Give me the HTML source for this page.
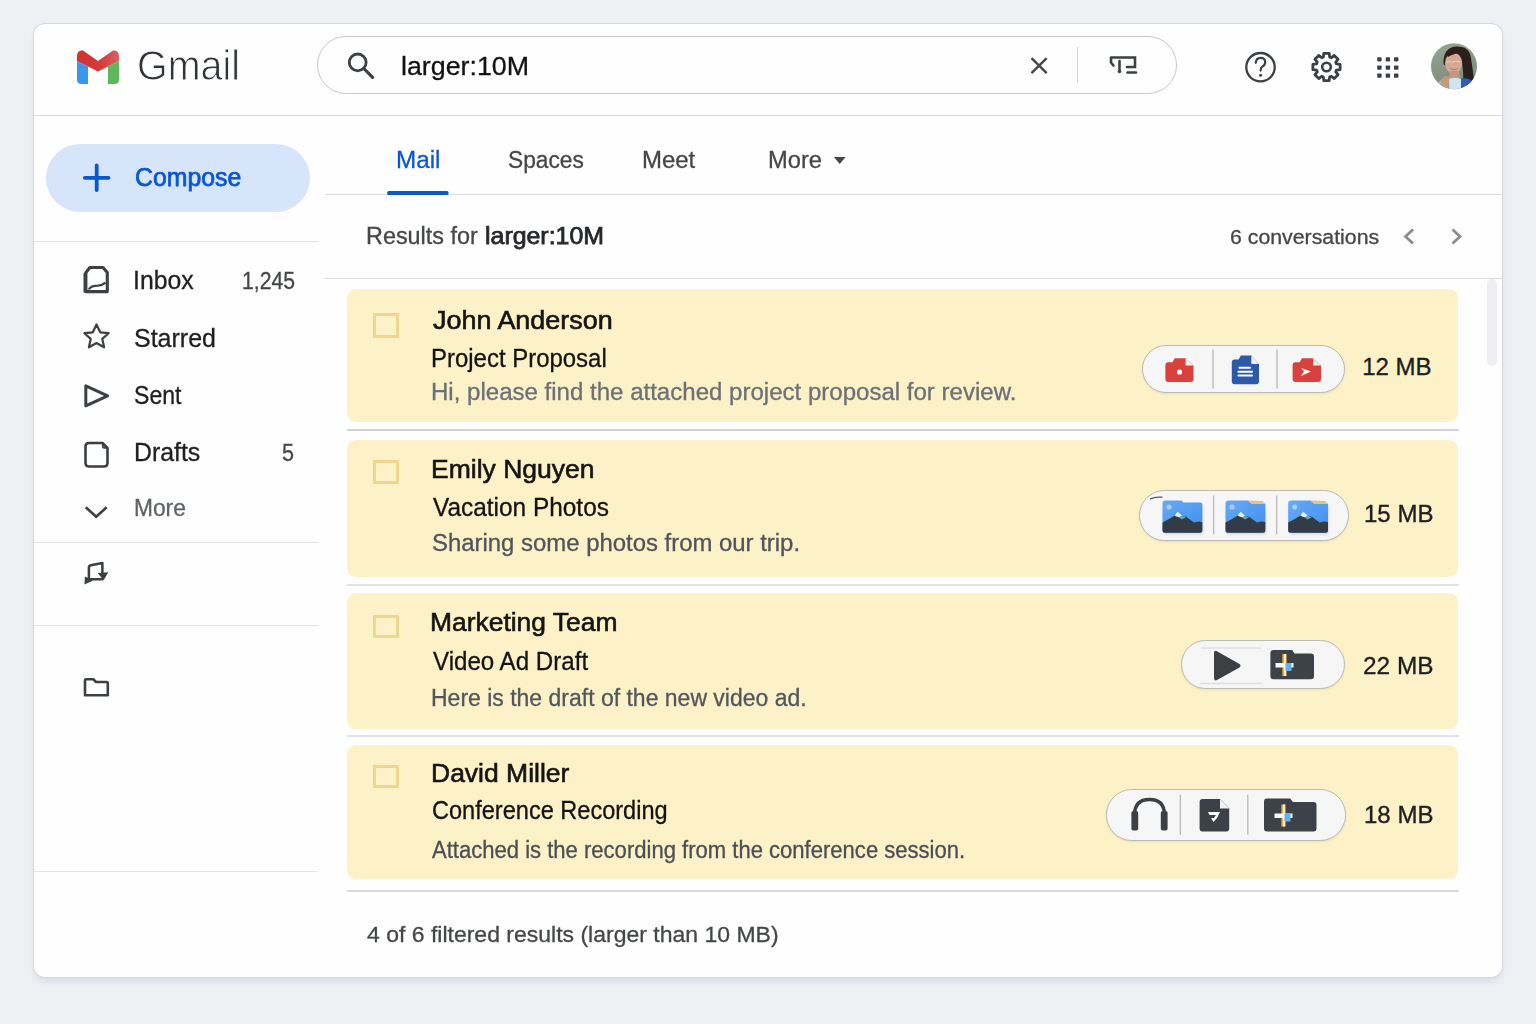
<!DOCTYPE html>
<html><head><meta charset="utf-8">
<style>
html,body{margin:0;padding:0;width:1536px;height:1024px;overflow:hidden;background:#eff0f4;font-family:"Liberation Sans",sans-serif;}
.card{position:absolute;left:34px;top:24px;width:1468px;height:953px;background:#fefefe;border-radius:11px;box-shadow:0 0 0 1px #d6d8de,0 5px 9px -2px rgba(70,80,110,0.17);}
.hl{position:absolute;height:1.5px;background:#dcdde1;}
.t{position:absolute;white-space:nowrap;transform-origin:0 0;}
.pill{position:absolute;background:#f6f6f6;border:1.9px solid #bbbab5;border-radius:30px;box-sizing:border-box;box-shadow:0 1px 2px rgba(0,0,0,0.08);}
.row{position:absolute;left:347px;width:1111px;background:#fdf1c7;border-radius:9px;}
.sep{position:absolute;left:347px;width:1112px;height:1.5px;background:#d8d9dc;}
.cb{position:absolute;left:372.5px;width:20.5px;border:3px solid #f0d78e;}
svg{position:absolute;left:0;top:0;}
</style></head><body>
<div class="card"></div>
<!-- header line -->
<div class="hl" style="left:34px;top:114.5px;width:1468px"></div>
<!-- sidebar dividers -->
<div class="hl" style="left:34px;top:241px;width:284px;background:#e3e4e7;height:1.3px"></div>
<div class="hl" style="left:34px;top:542px;width:284px;background:#e3e4e7;height:1.3px"></div>
<div class="hl" style="left:34px;top:624.5px;width:284px;background:#e3e4e7;height:1.3px"></div>
<div class="hl" style="left:34px;top:870.8px;width:284px;background:#e3e4e7;height:1.3px"></div>
<!-- main lines -->
<div class="hl" style="left:325px;top:193.7px;width:1177px"></div>
<div class="hl" style="left:325px;top:277.6px;width:1177px"></div>
<!-- search pill -->
<div style="position:absolute;left:317px;top:36px;width:860px;height:58px;border:1.7px solid #c6c8cd;border-radius:30px;box-sizing:border-box;background:#fefefe"></div>
<div style="position:absolute;left:1077px;top:47px;width:1.2px;height:36px;background:#d5d5d8"></div>
<!-- compose -->
<div style="position:absolute;left:46px;top:144px;width:264px;height:68px;border-radius:34px;background:#d7e5fa"></div>
<!-- scrollbar -->
<div style="position:absolute;left:1486.5px;top:279px;width:10px;height:87px;border-radius:5px;background:#efeff2"></div>
<div class="t" style="left:136.53px;top:44.94px;font-size:42px;line-height:42px;color:#303337;transform:scaleX(0.9383);-webkit-text-stroke:0.9px #fefefe">Gmail</div>
<div class="t" style="left:401.24px;top:52.95px;font-size:26.4px;line-height:26.4px;color:#121212;transform:scaleX(1.0152);-webkit-text-stroke:0.3px #121212">larger:10M</div>
<div class="t" style="left:134.55px;top:165.29px;font-size:25.4px;line-height:25.4px;color:#0b57d0;transform:scaleX(0.9782);-webkit-text-stroke:0.75px #0b57d0">Compose</div>
<div class="t" style="left:133.49px;top:267.93px;font-size:25px;line-height:25px;color:#1f1f1f;transform:scaleX(0.9918);-webkit-text-stroke:0.3px #1f1f1f">Inbox</div>
<div class="t" style="left:242.30px;top:269.63px;font-size:23px;line-height:23px;color:#444746;transform:scaleX(0.9217);-webkit-text-stroke:0.3px #444746">1,245</div>
<div class="t" style="left:134.28px;top:325.73px;font-size:25px;line-height:25px;color:#1f1f1f;transform:scaleX(0.9995);-webkit-text-stroke:0.3px #1f1f1f">Starred</div>
<div class="t" style="left:134.36px;top:382.93px;font-size:25px;line-height:25px;color:#1f1f1f;transform:scaleX(0.9221);-webkit-text-stroke:0.3px #1f1f1f">Sent</div>
<div class="t" style="left:133.89px;top:439.93px;font-size:25px;line-height:25px;color:#1f1f1f;transform:scaleX(0.9938);-webkit-text-stroke:0.3px #1f1f1f">Drafts</div>
<div class="t" style="left:282.34px;top:441.63px;font-size:23px;line-height:23px;color:#444746;transform:scaleX(0.9373);-webkit-text-stroke:0.3px #444746">5</div>
<div class="t" style="left:134.28px;top:496.60px;font-size:23.5px;line-height:23.5px;color:#5f6368;transform:scaleX(0.9683);-webkit-text-stroke:0.3px #5f6368">More</div>
<div class="t" style="left:395.69px;top:147.59px;font-size:24.7px;line-height:24.7px;color:#0b57d0;transform:scaleX(0.9813);-webkit-text-stroke:0.3px #0b57d0">Mail</div>
<div class="t" style="left:508.28px;top:147.59px;font-size:24.7px;line-height:24.7px;color:#444746;transform:scaleX(0.9207);-webkit-text-stroke:0.3px #444746">Spaces</div>
<div class="t" style="left:642.33px;top:148.39px;font-size:24.7px;line-height:24.7px;color:#444746;transform:scaleX(0.9706);-webkit-text-stroke:0.3px #444746">Meet</div>
<div class="t" style="left:767.74px;top:148.39px;font-size:24.7px;line-height:24.7px;color:#444746;transform:scaleX(0.9597);-webkit-text-stroke:0.3px #444746">More</div>
<div class="t" style="left:365.61px;top:225.20px;font-size:23.5px;line-height:23.5px;color:#444746;transform:scaleX(0.9948);-webkit-text-stroke:0.3px #444746">Results for</div>
<div class="t" style="left:485.38px;top:225.20px;font-size:23.5px;line-height:23.5px;color:#26282b;transform:scaleX(1.0596);-webkit-text-stroke:0.75px #26282b">larger:10M</div>
<div class="t" style="left:1229.62px;top:226.57px;font-size:20px;line-height:20px;color:#444746;transform:scaleX(1.0647);-webkit-text-stroke:0.3px #444746">6 conversations</div>
<div class="row" style="top:289px;height:133px"></div>
<div class="sep" style="top:429.25px;background:#d2d3d7"></div>
<div class="cb" style="top:313.4px;height:18.3px"></div>
<div class="t" style="left:432.82px;top:306.99px;font-size:26px;line-height:26px;color:#141414;transform:scaleX(1.0357);-webkit-text-stroke:0.6px #141414">John Anderson</div>
<div class="t" style="left:430.69px;top:345.93px;font-size:25px;line-height:25px;color:#141414;transform:scaleX(0.9580);-webkit-text-stroke:0.3px #141414">Project Proposal</div>
<div class="t" style="left:430.70px;top:380.63px;font-size:23px;line-height:23px;color:#6b7178;transform:scaleX(1.0453);-webkit-text-stroke:0.3px #6b7178">Hi, please find the attached project proposal for review.</div>
<div class="t" style="left:1362.15px;top:355.28px;font-size:24px;line-height:24px;color:#1d1f22;transform:scaleX(1.0000);-webkit-text-stroke:0.35px #1d1f22">12 MB</div>
<div class="row" style="top:440px;height:137px"></div>
<div class="sep" style="top:584.25px;background:#e1e2e5"></div>
<div class="cb" style="top:460.0px;height:17.7px"></div>
<div class="t" style="left:430.55px;top:455.89px;font-size:26px;line-height:26px;color:#141414;transform:scaleX(1.0198);-webkit-text-stroke:0.6px #141414">Emily Nguyen</div>
<div class="t" style="left:432.81px;top:494.93px;font-size:25px;line-height:25px;color:#141414;transform:scaleX(0.9761);-webkit-text-stroke:0.3px #141414">Vacation Photos</div>
<div class="t" style="left:431.68px;top:532.23px;font-size:23px;line-height:23px;color:#4f555b;transform:scaleX(1.0394);-webkit-text-stroke:0.3px #4f555b">Sharing some photos from our trip.</div>
<div class="t" style="left:1363.52px;top:501.78px;font-size:24px;line-height:24px;color:#1d1f22;transform:scaleX(1.0019);-webkit-text-stroke:0.35px #1d1f22">15 MB</div>
<div class="row" style="top:593px;height:136px"></div>
<div class="sep" style="top:735.25px;background:#e2e3e6"></div>
<div class="cb" style="top:614.6px;height:17.7px"></div>
<div class="t" style="left:430.44px;top:609.49px;font-size:26px;line-height:26px;color:#141414;transform:scaleX(1.0161);-webkit-text-stroke:0.6px #141414">Marketing Team</div>
<div class="t" style="left:432.82px;top:648.73px;font-size:25px;line-height:25px;color:#141414;transform:scaleX(0.9648);-webkit-text-stroke:0.3px #141414">Video Ad Draft</div>
<div class="t" style="left:431.34px;top:687.03px;font-size:23px;line-height:23px;color:#52575d;transform:scaleX(0.9994);-webkit-text-stroke:0.3px #52575d">Here is the draft of the new video ad.</div>
<div class="t" style="left:1363.40px;top:653.58px;font-size:24px;line-height:24px;color:#1d1f22;transform:scaleX(1.0155);-webkit-text-stroke:0.35px #1d1f22">22 MB</div>
<div class="row" style="top:745px;height:134px"></div>
<div class="sep" style="top:890.25px;background:#dadade"></div>
<div class="cb" style="top:764.6px;height:17.9px"></div>
<div class="t" style="left:430.81px;top:759.89px;font-size:26px;line-height:26px;color:#141414;transform:scaleX(1.0189);-webkit-text-stroke:0.6px #141414">David Miller</div>
<div class="t" style="left:431.77px;top:798.08px;font-size:25px;line-height:25px;color:#141414;transform:scaleX(0.9420);-webkit-text-stroke:0.3px #141414">Conference Recording</div>
<div class="t" style="left:432.31px;top:838.93px;font-size:23px;line-height:23px;color:#4a4f55;transform:scaleX(0.9587);-webkit-text-stroke:0.3px #4a4f55">Attached is the recording from the conference session.</div>
<div class="t" style="left:1363.52px;top:802.88px;font-size:24px;line-height:24px;color:#1d1f22;transform:scaleX(1.0019);-webkit-text-stroke:0.35px #1d1f22">18 MB</div>
<div class="t" style="left:366.85px;top:922.70px;font-size:22.8px;line-height:22.8px;color:#444746;transform:scaleX(1.0087);-webkit-text-stroke:0.3px #444746">4 of 6 filtered results (larger than 10 MB)</div>
<svg width="1536" height="1024" viewBox="0 0 1536 1024">
<defs>
  <clipPath id="av"><circle cx="1454" cy="66.3" r="23"/></clipPath>
  <linearGradient id="mred" x1="0" y1="0" x2="1" y2="0"><stop offset="0" stop-color="#d4322c"/><stop offset="0.55" stop-color="#d63a36"/><stop offset="1" stop-color="#d7636a"/></linearGradient>
  <linearGradient id="avbg" x1="0" y1="0" x2="0.3" y2="1"><stop offset="0" stop-color="#96a592"/><stop offset="1" stop-color="#7b8c78"/></linearGradient>
  <linearGradient id="sky" x1="0" y1="0" x2="0" y2="1"><stop offset="0" stop-color="#4f9af0"/><stop offset="1" stop-color="#3c86e6"/></linearGradient>
</defs>
<!-- Gmail logo -->
<path d="M77,56 Q77,50 83,50.5 L98,61 L113,50.5 Q119,50 119,56 L119,61 L98,71.5 L77,61 Z" fill="url(#mred)"/>
<path d="M77,61 L88,66.5 L88,84 L81.5,84 Q77,84 77,79.5 Z" fill="#3a96ee"/>
<path d="M119,61 L108,66.5 L108,84 L114.5,84 Q119,84 119,79.5 Z" fill="#5cb85a"/>
<!-- search icon -->
<circle cx="357.7" cy="62.4" r="8.4" fill="none" stroke="#3c4043" stroke-width="2.8"/>
<line x1="363.8" y1="68.5" x2="372.6" y2="77.4" stroke="#3c4043" stroke-width="3.2" stroke-linecap="round"/>
<!-- X -->
<path d="M1031.5,58.2 L1046.7,73.2 M1046.7,58.2 L1031.5,73.2" stroke="#444746" stroke-width="2.4" fill="none"/>
<!-- filter icon -->
<path d="M1111,57.5 L1135,57.5 L1135,67 L1127,67 M1111,57.5 L1111,62.5 L1113.5,65.5 M1119.5,61 L1119.5,70 M1127.5,72.5 L1136,72.5" stroke="#3c4043" stroke-width="2.6" fill="none" stroke-linecap="round"/>
<circle cx="1119.5" cy="71.5" r="1.8" fill="#3c4043"/>
<!-- help -->
<circle cx="1260.5" cy="67.2" r="14.2" fill="none" stroke="#3c4043" stroke-width="2.3"/>
<path d="M1255.8,62.8 Q1256,57.8 1260.6,57.8 Q1265.2,57.8 1265.2,62.3 Q1265.2,65 1262.4,66.6 Q1260.6,67.7 1260.6,70.6" fill="none" stroke="#3c4043" stroke-width="2.2" stroke-linecap="round"/>
<circle cx="1260.6" cy="75.2" r="1.5" fill="#3c4043"/>
<!-- gear -->
<path d="M1323.36,57.08 L1323.79,53.37 L1329.21,53.37 L1329.64,57.08 L1331.29,57.77 L1334.22,55.44 L1338.06,59.28 L1335.73,62.21 L1336.42,63.86 L1340.13,64.29 L1340.13,69.71 L1336.42,70.14 L1335.73,71.79 L1338.06,74.72 L1334.22,78.56 L1331.29,76.23 L1329.64,76.92 L1329.21,80.63 L1323.79,80.63 L1323.36,76.92 L1321.71,76.23 L1318.78,78.56 L1314.94,74.72 L1317.27,71.79 L1316.58,70.14 L1312.87,69.71 L1312.87,64.29 L1316.58,63.86 L1317.27,62.21 L1314.94,59.28 L1318.78,55.44 L1321.71,57.77 Z" fill="none" stroke="#3c4043" stroke-width="2.8" stroke-linejoin="round"/>
<circle cx="1326.5" cy="67" r="4.3" fill="none" stroke="#3c4043" stroke-width="2.6"/>
<!-- grid -->
<g fill="#3c4043">
<rect x="1377.2" y="57.2" width="4.4" height="4.2" rx="0.8"/><rect x="1385.7" y="57.2" width="4.4" height="4.2" rx="0.8"/><rect x="1394" y="57.2" width="4.4" height="4.2" rx="0.8"/>
<rect x="1377.2" y="65.5" width="4.4" height="4.2" rx="0.8"/><rect x="1385.7" y="65.5" width="4.4" height="4.2" rx="0.8"/><rect x="1394" y="65.5" width="4.4" height="4.2" rx="0.8"/>
<rect x="1377.2" y="73.6" width="4.4" height="4.2" rx="0.8"/><rect x="1385.7" y="73.6" width="4.4" height="4.2" rx="0.8"/><rect x="1394" y="73.6" width="4.4" height="4.2" rx="0.8"/>
</g>
<!-- avatar -->
<g clip-path="url(#av)">
<rect x="1430" y="43" width="48" height="48" fill="url(#avbg)"/>
<path d="M1443.5,64 Q1443,47.5 1456,46.5 Q1469.5,46 1471,58 L1473,72 Q1474.5,80 1472.5,85 L1463.5,85 L1463,70 Q1462,57 1456,53.5 Q1448,55 1446,66 Z" fill="#2a1f1c"/>
<ellipse cx="1453.6" cy="63.2" rx="8.6" ry="10.4" fill="#d6a995"/>
<path d="M1446.5,54.5 Q1452,51 1460,54 Q1456,52 1448,57 Z" fill="#2a1f1c"/>
<path d="M1446,62 L1461.5,61.5" stroke="#e9c9bd" stroke-width="1.2"/>
<path d="M1450,68.5 Q1454,71 1458,68.5" stroke="#b07a6a" stroke-width="1" fill="none"/>
<path d="M1449.8,71 L1458.8,71 L1460,79 L1449,79 Z" fill="#c49683"/>
<path d="M1447,92 L1448,79.5 Q1454,76.5 1461,79 L1462,92 Z" fill="#cfe3f2"/>
<path d="M1461,78.5 Q1470,77 1475,84 L1476,92 L1461,92 Z" fill="#2d5daf"/>
<path d="M1439,92 L1441,80 Q1445,74 1449,77 L1449.5,92 Z" fill="#c19c7c"/>
<path d="M1436,92 L1437.5,83 L1441,80 L1441,92 Z" fill="#a3b8c9"/>
</g>
<!-- compose plus -->
<path d="M96.7,165.5 L96.7,190 M84.8,177.8 L108.6,177.8" stroke="#0b57d0" stroke-width="3.8" stroke-linecap="round"/>
<!-- sidebar icons -->
<g fill="none" stroke="#3c4043" stroke-width="2.6" stroke-linejoin="round">
  <path d="M85.8,291.6 L85.8,272.8 L89.9,267.5 L103,267.5 L107.3,272.5 L107.3,291.6 Z" stroke-width="3.1"/>
  <path d="M85.3,273 L85.3,292.5" stroke-width="3.6"/>
  <path d="M88.8,289.5 Q91,285.6 98,285.6 Q102,285.5 105.5,282.6" stroke-width="2.3"/>
  <path d="M96.5,324.5 L100.2,332.3 L108.6,333.2 L102.3,338.9 L104.1,347.3 L96.5,343 L88.9,347.3 L90.7,338.9 L84.4,333.2 L92.8,332.3 Z" stroke-width="2.2"/>
  <path d="M85.8,385.8 L107.6,395.8 L85.8,405.8 Z" stroke-width="3"/>
  <path d="M89,443 L102.5,443 L107.5,448 L107.5,463 Q107.5,466.5 104,466.5 L89,466.5 Q85.5,466.5 85.5,463 L85.5,446.5 Q85.5,443 89,443 Z"/>
  <path d="M102.8,443.5 L102.8,446.2 Q102.8,447.8 104.4,447.8 L107,447.8" stroke-width="1.8"/>
  <path d="M85.8,507.3 L96.2,516.8 L106.6,507.3" stroke-width="2.6"/>
  <path d="M88.9,579 L88.9,567.6 Q88.9,565.6 90.9,565.2 L102.4,562.9 L102.4,573.5 M103.2,579.2 L89.2,579.2" stroke-width="2.5"/>
  <path d="M97.6,573.1 L108.3,572.3 L103.6,580.2 Z" fill="#3c4043" stroke="none"/>
  <path d="M84.9,576.6 L84.4,584.4 L92.8,580.7 L89.3,578.4 Z" fill="#3c4043" stroke="none"/>
  <path d="M85,695.2 L85,680.5 Q85,679.2 86.3,679.2 L93.2,679.2 L96,682 L106.5,682 Q107.8,682 107.8,683.3 L107.8,695.2 Z" stroke-width="2.6"/>
</g>
<!-- tabs -->
<rect x="387.2" y="190.9" width="61.3" height="4" rx="1.5" fill="#0b57d0"/>
<path d="M833.9,157 L845.6,157 L839.75,163.9 Z" fill="#444746"/>
<!-- chevrons -->
<path d="M1413,229.5 L1405.5,236.5 L1413,243.5 M1452.5,229.5 L1460,236.5 L1452.5,243.5" fill="none" stroke="#8a8c90" stroke-width="2.8"/>
</svg>
<div class="pill" style="left:1142px;top:345px;width:203px;height:48px;border-radius:24.0px"></div>
<div class="pill" style="left:1138.8px;top:490px;width:210.20000000000005px;height:51px;border-radius:25.5px"></div>
<div class="pill" style="left:1180.5px;top:639.6px;width:164.5px;height:49.89999999999998px;border-radius:24.94999999999999px"></div>
<div class="pill" style="left:1106.4px;top:789px;width:239.39999999999986px;height:51.5px;border-radius:25.75px"></div>
<svg width="1536" height="1024" viewBox="0 0 1536 1024"><defs><filter id="blur" x="-20%" y="-20%" width="140%" height="140%"><feGaussianBlur stdDeviation="1.2"/></filter><linearGradient id="sky2" x1="0" y1="0" x2="1" y2="1"><stop offset="0" stop-color="#6aaaf3"/><stop offset="1" stop-color="#3d8ff0"/></linearGradient></defs>
<path d="M1150.5,498.8 Q1155,496.6 1162,497.2" fill="none" stroke="#5a5a5a" stroke-width="1.3" stroke-linecap="round"/>
<line x1="1213" y1="349.5" x2="1213" y2="388.6" stroke="#b9b9bb" stroke-width="1.3"/>
<line x1="1277" y1="349.5" x2="1277" y2="388.6" stroke="#b9b9bb" stroke-width="1.3"/>
<line x1="1213.6" y1="495.5" x2="1213.6" y2="534.2" stroke="#b9b9bb" stroke-width="1.3"/>
<line x1="1276.7" y1="495.5" x2="1276.7" y2="534.2" stroke="#b9b9bb" stroke-width="1.3"/>
<line x1="1180.3" y1="794.8" x2="1180.3" y2="834.7" stroke="#b9b9bb" stroke-width="1.3"/>
<line x1="1247.8" y1="794.8" x2="1247.8" y2="834.7" stroke="#b9b9bb" stroke-width="1.3"/>
<path d="M1165.4,365.3 Q1165.4,362.3 1168.4,362.3 L1172.4250000000002,362.3 L1174.673,358.3 L1185.632,358.3 L1193.5,365.41 L1193.5,379 Q1193.5,382 1190.5,382 L1168.4,382 Q1165.4,382 1165.4,379 Z" fill="#d9413d"/>
<path d="M1185.632,358.3 L1185.632,365.41 L1193.5,365.41 Z" fill="#f7eaea"/>
<circle cx="1179.5" cy="372" r="2.6" fill="#fff"/>
<path d="M1231.8,362.5 Q1231.8,359.5 1234.8,359.5 L1238.6,359.5 L1240.776,355.5 L1251.384,355.5 L1259,364.11 L1259,381.2 Q1259,384.2 1256,384.2 L1234.8,384.2 Q1231.8,384.2 1231.8,381.2 Z" fill="#2d59a9"/>
<path d="M1251.384,355.5 L1251.384,364.11 L1259,364.11 Z" fill="#eef2f8"/>
<rect x="1238.5" y="366.8" width="12.5" height="1.9" rx="0.9" fill="#fff"/>
<rect x="1237.5" y="370.8" width="15.5" height="1.9" rx="0.9" fill="#fff"/>
<rect x="1237.5" y="374.6" width="15.5" height="1.9" rx="0.9" fill="#fff"/>
<path d="M1292.6,365.3 Q1292.6,362.3 1295.6,362.3 L1299.6999999999998,362.3 L1301.972,358.3 L1313.048,358.3 L1321,365.41 L1321,379 Q1321,382 1318,382 L1295.6,382 Q1292.6,382 1292.6,379 Z" fill="#d9413d"/>
<path d="M1313.048,358.3 L1313.048,365.41 L1321,365.41 Z" fill="#f7eaea"/>
<path d="M1301,368 L1311,371.5 L1301,376 L1304,371.5 Z" fill="#fff"/>
<rect x="1163.5" y="503.6" width="39.799999999999955" height="31.199999999999932" rx="3" fill="#000" opacity="0.10" filter="url(#blur)"/>
<path d="M1162.5,503.6 Q1162.5,500.6 1165.5,500.6 L1181.5,500.6 L1183.5,502.6 L1200.3,502.6 Q1202.3,502.6 1202.3,504.6 L1202.3,530.3 Q1202.3,532.8 1199.8,532.8 L1165.0,532.8 Q1162.5,532.8 1162.5,530.3 Z" fill="url(#sky2)"/>
<path d="M1162.5,522.4 Q1169.5,519.1 1174.0,516.1 L1177.5,511.6 L1181.5,515.4 L1186.5,517.1 L1194.0,522.4 L1198.0,521.6 L1202.3,522.0 L1202.3,530.3 Q1202.3,532.8 1199.8,532.8 L1165.0,532.8 Q1162.5,532.8 1162.5,530.3 Z" fill="#323c46"/>
<path d="M1174.5,515.6 L1177.5,511.6 L1182.0,515.6 L1179.5,517.6 L1176.5,516.6 Z" fill="#e6efe8"/>
<path d="M1179.5,517.6 L1182.0,515.6 L1186.0,517.4 L1181.5,519.6 Z" fill="#5ec9d8" opacity="0.8"/>
<circle cx="1169.0" cy="507.1" r="2.6" fill="#b8d6f7" opacity="0.8"/>
<rect x="1226.5" y="503.6" width="39.799999999999955" height="31.199999999999932" rx="3" fill="#000" opacity="0.10" filter="url(#blur)"/>
<path d="M1225.5,503.6 Q1225.5,500.6 1228.5,500.6 L1248.0,500.6 L1251.5,503.8 L1265.3,503.8 L1265.3,530.3 Q1265.3,532.8 1262.8,532.8 L1228.0,532.8 Q1225.5,532.8 1225.5,530.3 Z" fill="url(#sky2)"/>
<path d="M1248.0,500.6 L1262.3,501.1 L1265.3,504.1 L1251.5,504.1 Z" fill="#e4c57c"/>
<path d="M1225.5,522.4 Q1232.5,519.1 1237.0,516.1 L1240.5,511.6 L1244.5,515.4 L1249.5,517.1 L1257.0,522.4 L1261.0,521.6 L1265.3,522.0 L1265.3,530.3 Q1265.3,532.8 1262.8,532.8 L1228.0,532.8 Q1225.5,532.8 1225.5,530.3 Z" fill="#323c46"/>
<path d="M1237.5,515.6 L1240.5,511.6 L1245.0,515.6 L1242.5,517.6 L1239.5,516.6 Z" fill="#e6efe8"/>
<path d="M1242.5,517.6 L1245.0,515.6 L1249.0,517.4 L1244.5,519.6 Z" fill="#5ec9d8" opacity="0.8"/>
<circle cx="1232.0" cy="507.1" r="2.6" fill="#b8d6f7" opacity="0.8"/>
<rect x="1289.2" y="503.6" width="39.799999999999955" height="31.199999999999932" rx="3" fill="#000" opacity="0.10" filter="url(#blur)"/>
<path d="M1288.2,503.6 Q1288.2,500.6 1291.2,500.6 L1310.7,500.6 L1314.2,503.8 L1328.0,503.8 L1328.0,530.3 Q1328.0,532.8 1325.5,532.8 L1290.7,532.8 Q1288.2,532.8 1288.2,530.3 Z" fill="url(#sky2)"/>
<path d="M1310.7,500.6 L1325.0,501.1 L1328.0,504.1 L1314.2,504.1 Z" fill="#e4c57c"/>
<path d="M1288.2,522.4 Q1295.2,519.1 1299.7,516.1 L1303.2,511.6 L1307.2,515.4 L1312.2,517.1 L1319.7,522.4 L1323.7,521.6 L1328.0,522.0 L1328.0,530.3 Q1328.0,532.8 1325.5,532.8 L1290.7,532.8 Q1288.2,532.8 1288.2,530.3 Z" fill="#323c46"/>
<path d="M1300.2,515.6 L1303.2,511.6 L1307.7,515.6 L1305.2,517.6 L1302.2,516.6 Z" fill="#e6efe8"/>
<path d="M1305.2,517.6 L1307.7,515.6 L1311.7,517.4 L1307.2,519.6 Z" fill="#5ec9d8" opacity="0.8"/>
<circle cx="1294.7" cy="507.1" r="2.6" fill="#b8d6f7" opacity="0.8"/>
<path d="M1201,648 L1261,648 M1200,683.5 L1262,683.5" fill="none" stroke="#e0e0e0" stroke-width="1.3"/>
<path d="M1216.5,651 Q1214,650 1214,653 L1214,678 Q1214,681.5 1217,680 L1239.5,667.5 Q1241.5,665.5 1239.5,664 Z" fill="#3c4043"/>
<path d="M1270.4,653 Q1270.4,650 1273.4,650 L1292.2,650 L1294.38,653.5 L1311,653.5 Q1314,653.5 1314,656.5 L1314,676.3 Q1314,679.3 1311,679.3 L1273.4,679.3 Q1270.4,679.3 1270.4,676.3 Z" fill="#3d4249"/>
<rect x="1282.3" y="654.0" width="4.4" height="22.0" fill="#e9a63a"/>
<rect x="1283.9" y="654.0" width="2.0" height="22.0" fill="#fff3d6"/>
<rect x="1275.5" y="663.0" width="18.0" height="4.5" fill="#f4f8fb"/>
<rect x="1285.5" y="663.0" width="6.0" height="8.0" fill="#63b3ea"/>
<path d="M1134.5,827 L1134.5,815 Q1134.5,799.5 1149.5,799.5 Q1164.5,799.5 1164.5,815 L1164.5,827" fill="none" stroke="#3c4043" stroke-width="3.4"/>
<rect x="1131.4" y="811" width="6.8" height="19.4" rx="2" fill="#3c4043"/>
<rect x="1160.8" y="811" width="6.8" height="19.4" rx="2" fill="#3c4043"/>
<path d="M1199.6,802 Q1199.6,799 1202.6,799 L1220,799 L1229.2,808.5 L1229.2,828.6 Q1229.2,831.6 1226.2,831.6 L1202.6,831.6 Q1199.6,831.6 1199.6,828.6 Z" fill="#3c4148"/>
<path d="M1220,799 L1220,808.5 L1229.2,808.5 Z" fill="#f2f2f2"/>
<path d="M1208,812 L1220,812 L1217,818 L1213.5,822 L1211,818 L1214,818 L1216,815 L1209.5,815 Z" fill="#fff"/>
<path d="M1264,801.6 Q1264,798.6 1267,798.6 L1290.25,798.6 L1292.875,802.1 L1313.5,802.1 Q1316.5,802.1 1316.5,805.1 L1316.5,828.6 Q1316.5,831.6 1313.5,831.6 L1267,831.6 Q1264,831.6 1264,828.6 Z" fill="#3d4249"/>
<rect x="1281.3" y="804.5" width="4.4" height="22.0" fill="#e9a63a"/>
<rect x="1282.9" y="804.5" width="2.0" height="22.0" fill="#fff3d6"/>
<rect x="1274.5" y="813.5" width="18.0" height="4.5" fill="#f4f8fb"/>
<rect x="1284.5" y="813.5" width="6.0" height="8.0" fill="#63b3ea"/>
</svg>
</body></html>
